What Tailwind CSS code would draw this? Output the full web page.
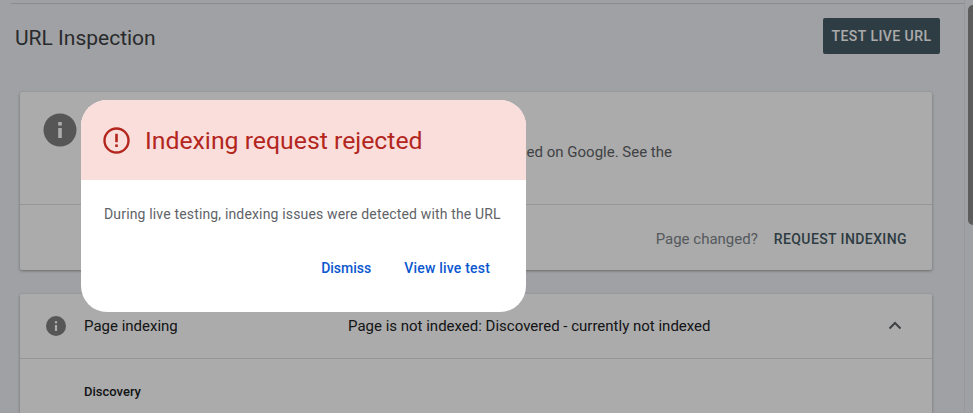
<!DOCTYPE html>
<html lang="en">
<head>
  <meta charset="UTF-8" />
  <title>URL Inspection</title>
  <script src="https://cdn.jsdelivr.net/npm/@tailwindcss/browser@4"></script>
</head>
<body class="relative h-[413px] w-[973px] overflow-hidden bg-[#eff0f5] font-[Roboto,sans-serif]">

  <!-- Page -->
  <div class="flex h-[413px] overflow-hidden">
    <main class="w-[964px] shrink-0 pt-[3px]">
      <div class="ml-[11px] h-px bg-[#cfd0d4]"></div>

      <header class="flex items-start justify-between pt-[14px] pr-[24px] pl-[15px]">
        <h1 class="pt-[2px] text-[21px] leading-[36px] text-[#3c4043]">URL Inspection</h1>
        <button class="h-[36px] w-[117px] rounded-[2px] bg-[#455a64] text-[14px] font-medium tracking-[0.45px] text-white">TEST LIVE URL</button>
      </header>

      <!-- Status card -->
      <section class="mt-[36px] ml-[20px] h-[178px] w-[912px] rounded-[2px] bg-white shadow-[0_1px_3px_rgba(0,0,0,0.35)]">
        <div class="flex h-[113px] justify-between border-b border-[#e0e0e0] pt-[21px] pr-[260px] pl-[23px]">
          <svg class="h-[34px] w-[34px] shrink-0" viewBox="0 0 34 34"><circle cx="17" cy="17" r="16.5" fill="#808080"/><rect x="15.2" y="15" width="3.6" height="10" fill="#fff"/><rect x="15.2" y="9" width="3.6" height="3.6" fill="#fff"/></svg>
          <p class="pt-[29px] text-[15px] leading-[20px] text-[#5f6368]">ed on Google. See the</p>
        </div>
        <div class="flex h-[64px] items-center justify-end pt-[4px] pr-[25px] text-[15px]">
          <span class="text-[#80868b]">Page changed?</span>
          <button class="ml-[16px] text-[14px] font-medium tracking-[0.4px] text-[#455a64]">REQUEST INDEXING</button>
        </div>
      </section>

      <!-- Page indexing card -->
      <section class="mt-[24px] ml-[20px] h-[140px] w-[912px] rounded-[2px] bg-white shadow-[0_1px_3px_rgba(0,0,0,0.35)]">
        <div class="flex h-[65px] items-center border-b border-[#e0e0e0] pr-[28px] pl-[25px] text-[15px] text-[#202124]">
          <svg class="h-[22px] w-[22px] shrink-0" viewBox="0 0 22 22"><circle cx="11" cy="11" r="10" fill="#808080"/><rect x="9.9" y="10" width="2.2" height="6" fill="#fff"/><rect x="9.9" y="6.2" width="2.2" height="2.2" fill="#fff"/></svg>
          <span class="w-[281px] pl-[17px]">Page indexing</span>
          <span class="flex-1">Page is not indexed: Discovered - currently not indexed</span>
          <svg class="h-[18px] w-[18px]" viewBox="0 0 18 18"><path d="M3.5 11.5 9 6l5.5 5.5" fill="none" stroke="#5f6368" stroke-width="2"/></svg>
        </div>
        <p class="pt-[25px] pl-[64px] text-[13px] leading-[16px] font-medium text-[#202124]">Discovery</p>
      </section>
    </main>

    <!-- Scrollbar -->
    <div class="flex-1 border-l border-[#e4e5ea] pt-[5px] pl-[3px]">
      <div class="h-[220px] rounded-l-full bg-[#8a8a8a]"></div>
    </div>
  </div>

  <!-- Scrim -->
  <div class="absolute inset-0 bg-black/33"></div>

  <!-- Dialog -->
  <div class="absolute top-[100px] left-[81px] w-[445px] overflow-hidden rounded-[26px] bg-white">
    <div class="flex h-[80px] items-center gap-[15px] bg-[#fadedb] pt-[1px] pl-[22px] text-[#b3261e]">
      <svg class="h-[27px] w-[27px] shrink-0" viewBox="0 0 27 27"><circle cx="13.5" cy="13.5" r="12" fill="none" stroke="currentColor" stroke-width="2.4"/><rect x="12.2" y="6.8" width="2.6" height="8.4" fill="currentColor"/><rect x="12.2" y="17.4" width="2.6" height="2.6" fill="currentColor"/></svg>
      <h2 class="text-[24.8px]">Indexing request rejected</h2>
    </div>
    <div class="h-[132px] pt-[24px] pr-[36px] pl-[23px]">
      <p class="text-[14px] leading-[20px] tracking-[0.16px] whitespace-nowrap text-[#5f6368]">During live testing, indexing issues were detected with the URL</p>
      <div class="mt-[34px] flex justify-end gap-[33px] text-[14px] font-medium text-[#0b57d0]">
        <button>Dismiss</button>
        <button class="tracking-[0.2px]">View live test</button>
      </div>
    </div>
  </div>

</body>
</html>
